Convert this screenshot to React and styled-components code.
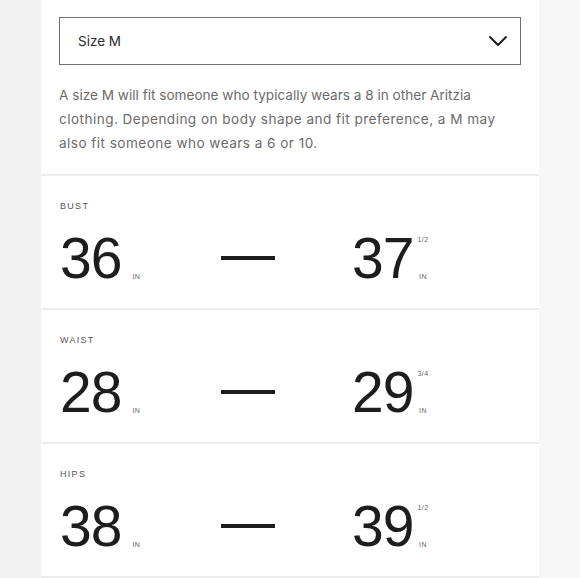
import React from "react";
import styled, { createGlobalStyle } from "styled-components";

const GlobalStyle = createGlobalStyle`
  html, body {
    margin: 0;
    padding: 0;
    background: linear-gradient(90deg, #f1f1f1 0%, #f4f4f4 50%, #f7f7f7 100%);
  }
  * {
    box-sizing: border-box;
  }
`;

const Page = styled.div`
  width: 580px;
  height: 578px;
  overflow: hidden;
`;

const Panel = styled.div`
  width: 498px;
  margin-left: 41px;
  background: #fff;
`;

const Intro = styled.div`
  padding: 17px 18px 19px;
  border-bottom: 2px solid #ececec;
`;

const Select = styled.div`
  height: 48px;
  border: 1px solid #707070;
  display: flex;
  align-items: center;
  justify-content: space-between;
  padding: 0 12px 0 18px;
  font-family: Inter, "Noto Sans", sans-serif;
  font-size: 13.5px;
  color: #2b2b2b;
`;

const Description = styled.p`
  margin: 18px 0 0;
  font-family: Inter, "Noto Sans", sans-serif;
  font-size: 13.6px;
  line-height: 24px;
  color: #6b6b6b;
`;

const Wide = styled.span`
  letter-spacing: 0.45px;
`;

const Section = styled.div`
  height: 134px;
  padding: 25px 19px 0;
  border-bottom: 2px solid #ececec;
`;

const Label = styled.div`
  font-family: "Liberation Sans", Arial, sans-serif;
  font-size: 9px;
  letter-spacing: 1.3px;
  color: #555;
  line-height: 10px;
`;

const Row = styled.div`
  display: flex;
  align-items: center;
  margin-top: 19px;
  height: 56px;
`;

const Value = styled.div`
  display: flex;
  align-items: stretch;
  width: ${(p) => p.$width}px;
  flex: none;
`;

const Number = styled.span`
  font-family: "Liberation Sans", Arial, sans-serif;
  font-size: 57px;
  line-height: 56px;
  color: #1d1d1d;
  letter-spacing: -1px;
`;

const Aside = styled.div`
  display: flex;
  flex-direction: column;
  justify-content: space-between;
  align-items: center;
  margin-left: ${(p) => (p.$fraction ? 4 : 11)}px;
  padding: 6px 0 5px;
  font-family: "Liberation Sans", Arial, sans-serif;
  font-size: 7px;
  letter-spacing: 0.5px;
  color: #666;
  line-height: 8px;
`;

const Dash = styled.div`
  width: 54px;
  height: 4px;
  background: #1d1d1d;
  margin-right: 77px;
  flex: none;
`;

const Measure = ({ value, fraction, width }) => (
  <Value $width={width}>
    <Number>{value}</Number>
    <Aside $fraction={!!fraction}>
      <span>{fraction || ""}</span>
      <span>IN</span>
    </Aside>
  </Value>
);

const rows = [
  { label: "BUST", from: "36", to: "37", toFraction: "1/2" },
  { label: "WAIST", from: "28", to: "29", toFraction: "3/4" },
  { label: "HIPS", from: "38", to: "39", toFraction: "1/2" },
];

const Chevron = () => (
  <svg width="20" height="12" viewBox="0 0 20 12" fill="none">
    <path d="M2 2l8 8 8-8" stroke="#1d1d1d" strokeWidth="2" strokeLinecap="round" strokeLinejoin="round" />
  </svg>
);

export default function App() {
  return (
    <Page>
      <GlobalStyle />
      <Panel>
        <Intro>
          <Select>
            <span>Size M</span>
            <Chevron />
          </Select>
          <Description>
            A size M will fit someone who typically wears a 8 in other Aritzia
            <br />
            <Wide>clothing. Depending on body shape and fit preference, a M may</Wide>
            <br />
            <Wide>also fit someone who wears a 6 or 10.</Wide>
          </Description>
        </Intro>
        {rows.map((r) => (
          <Section key={r.label}>
            <Label>{r.label}</Label>
            <Row>
              <Measure value={r.from} width={161} />
              <Dash />
              <Measure value={r.to} fraction={r.toFraction} width={120} />
            </Row>
          </Section>
        ))}
      </Panel>
    </Page>
  );
}
